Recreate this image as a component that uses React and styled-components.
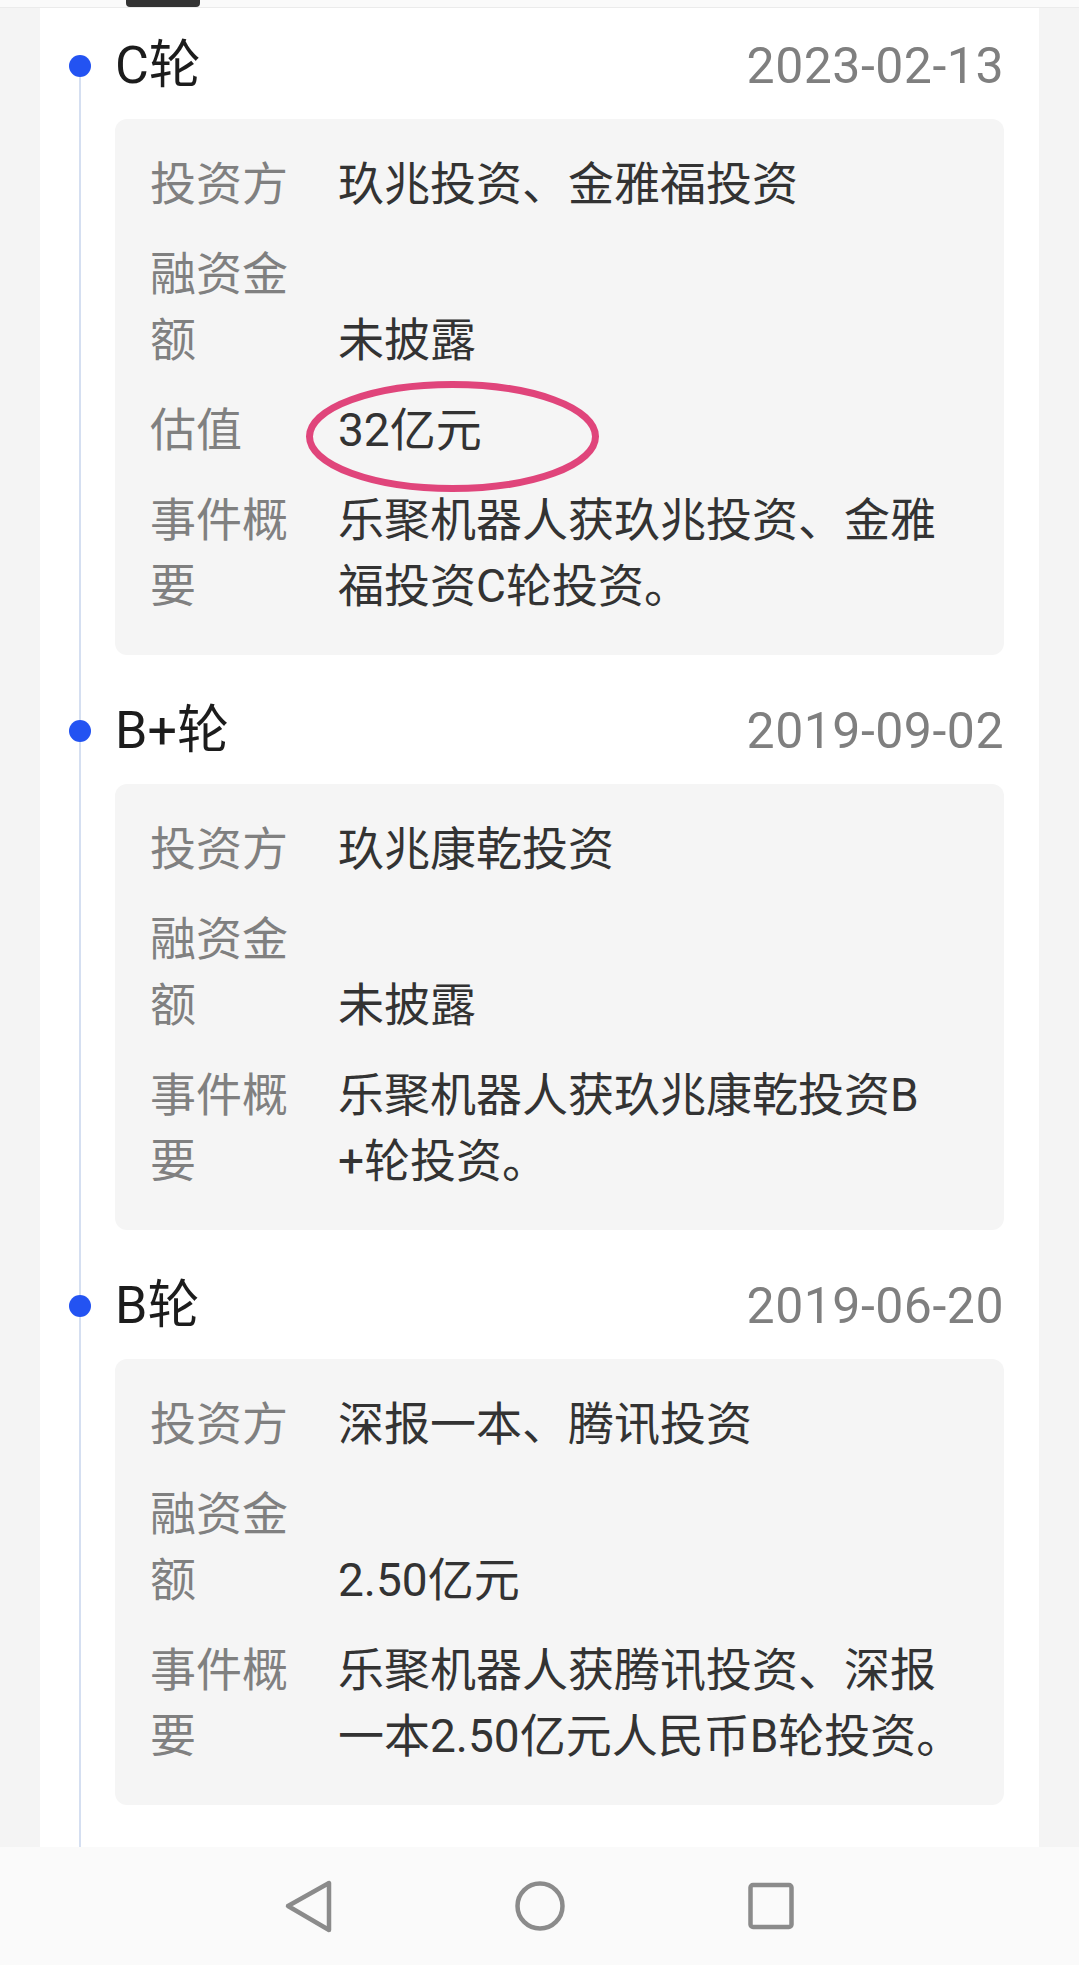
import React from 'react';
import styled, { createGlobalStyle } from 'styled-components';

const Global = createGlobalStyle`
  html, body { margin: 0; padding: 0; }
  body {
    background: #f4f4f4;
    font-family: Roboto, "Noto Sans CJK SC", sans-serif;
  }
`;

const Screen = styled.div`
  width: 1079px;
  height: 1965px;
  display: flex;
  flex-direction: column;
  overflow: hidden;
  background: #f4f4f4;
`;

const TopStrip = styled.div`
  flex: none;
  height: 7px;
  background: #fafafa;
  border-bottom: 1px solid #ebebeb;
  padding-left: 126px;
  display: flex;
`;

const Handle = styled.div`
  width: 74px;
  height: 7px;
  background: #333;
  border-radius: 0 0 4px 4px;
`;

const Scroll = styled.div`
  flex: 1;
  min-height: 0;
  overflow: hidden;
  padding: 0 40px;
  display: flex;
  flex-direction: column;
`;

const Panel = styled.div`
  flex: 1;
  background: #fff;
  padding-right: 35px;
`;

const Event = styled.section`
  display: grid;
  grid-template-columns: 75px 1fr;
`;

const Rail = styled.div`
  display: flex;
  flex-direction: column;
  padding-left: 29px;
`;

const RailLine = styled.div`
  width: 2px;
  margin-left: 10px;
  background: ${p => (p.$hidden ? 'transparent' : '#d5dff1')};
  height: ${p => (p.$h ? `${p.$h}px` : 'auto')};
  flex: ${p => (p.$grow ? 1 : 'none')};
`;

const Dot = styled.div`
  width: 22px;
  height: 22px;
  border-radius: 50%;
  background: #2353f2;
  flex: none;
`;

const Body = styled.div`
  padding-top: ${p => p.$top}px;
  padding-bottom: ${p => p.$bottom || 0}px;
`;

const Header = styled.div`
  height: 64px;
  display: flex;
  align-items: center;
  justify-content: space-between;
`;

const Round = styled.div`
  font-size: 52px;
  line-height: 64px;
  color: #1c1c1c;
`;

const DateText = styled.div`
  font-size: 50px;
  line-height: 64px;
  color: #7f7f7f;
  letter-spacing: 0.5px;
`;

const Card = styled.div`
  margin-top: 21px;
  background: #f5f5f5;
  border-radius: 12px;
  padding: 32px 30px 36px 35px;
  display: flex;
  flex-direction: column;
  gap: 24px;
`;

const Row = styled.div`
  display: flex;
  align-items: flex-end;
  font-size: 46px;
  line-height: 66px;
`;

const Label = styled.div`
  flex: none;
  width: 150px;
  margin-right: 38px;
  color: #808080;
`;

const Value = styled.div`
  flex: 1;
  min-width: 0;
  color: #333;
`;

const Circled = styled.span`
  position: relative;
  display: inline-block;
`;

const Ring = styled.svg`
  position: absolute;
  left: -32px;
  top: -16px;
  width: 293px;
  height: 111px;
  overflow: visible;
  pointer-events: none;
`;

const NavBar = styled.div`
  flex: none;
  height: 118px;
  background: #fafafa;
  display: flex;
  align-items: center;
  justify-content: center;
  gap: 171px;
`;

const NavIcon = styled.svg`
  width: 60px;
  height: 60px;
  display: block;
`;

const events = [
  {
    round: 'C轮',
    date: '2023-02-13',
    rows: [
      ['投资方', '玖兆投资、金雅福投资'],
      ['融资金额', '未披露'],
      ['估值', '32亿元', true],
      ['事件概要', '乐聚机器人获玖兆投资、金雅福投资C轮投资。'],
    ],
  },
  {
    round: 'B+轮',
    date: '2019-09-02',
    rows: [
      ['投资方', '玖兆康乾投资'],
      ['融资金额', '未披露'],
      ['事件概要', '乐聚机器人获玖兆康乾投资B\u200B+轮投资。'],
    ],
  },
  {
    round: 'B轮',
    date: '2019-06-20',
    rows: [
      ['投资方', '深报一本、腾讯投资'],
      ['融资金额', '2.50亿元'],
      ['事件概要', '乐聚机器人获腾讯投资、深报一本2.50亿元人民币B轮投资。'],
    ],
  },
];

export default function App() {
  return (
    <>
      <Global />
      <Screen>
        <TopStrip>
          <Handle />
        </TopStrip>
        <Scroll>
          <Panel>
            {events.map((ev, i) => {
              const top = i === 0 ? 26 : 44;
              const last = i === events.length - 1;
              return (
                <Event key={ev.round}>
                  <Rail>
                    <RailLine $hidden={i === 0} $h={top + 21} />
                    <Dot />
                    <RailLine $grow />
                  </Rail>
                  <Body $top={top} $bottom={last ? 120 : 0}>
                    <Header>
                      <Round>{ev.round}</Round>
                      <DateText>{ev.date}</DateText>
                    </Header>
                    <Card>
                      {ev.rows.map(([label, value, circled]) => (
                        <Row key={label}>
                          <Label>{label}</Label>
                          <Value>
                            {circled ? (
                              <Circled>
                                {value}
                                <Ring viewBox="0 0 293 111">
                                  <ellipse
                                    cx="146.5"
                                    cy="55.5"
                                    rx="143"
                                    ry="52"
                                    fill="none"
                                    stroke="#e0457b"
                                    strokeWidth="7"
                                  />
                                </Ring>
                              </Circled>
                            ) : (
                              value
                            )}
                          </Value>
                        </Row>
                      ))}
                    </Card>
                  </Body>
                </Event>
              );
            })}
          </Panel>
        </Scroll>
        <NavBar>
          <NavIcon viewBox="0 0 60 60">
            <path
              d="M9 30 L50 7 L50 54 Z"
              fill="none"
              stroke="#8b8b8b"
              strokeWidth="4.5"
              strokeLinejoin="round"
            />
          </NavIcon>
          <NavIcon viewBox="0 0 60 60">
            <circle cx="30" cy="30" r="22.5" fill="none" stroke="#8b8b8b" strokeWidth="4.5" />
          </NavIcon>
          <NavIcon viewBox="0 0 60 60">
            <rect x="9.5" y="9" width="41" height="42" rx="2.5" fill="none" stroke="#8b8b8b" strokeWidth="4.5" />
          </NavIcon>
        </NavBar>
      </Screen>
    </>
  );
}
